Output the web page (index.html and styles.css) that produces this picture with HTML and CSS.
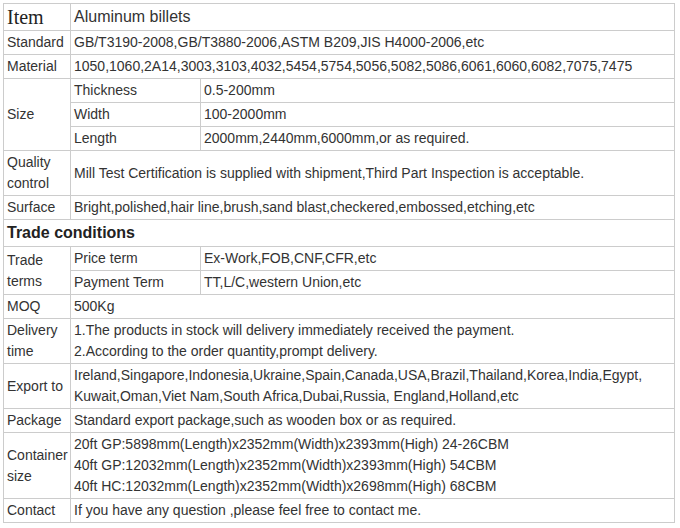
FILE: index.html
```html
<!DOCTYPE html>
<html>
<head>
<meta charset="utf-8">
<link rel="stylesheet" href="styles.css">
</head>
<body>
<table class="spec">
  <colgroup>
    <col class="c1">
    <col class="c2">
    <col class="c3">
  </colgroup>
  <tr class="big">
    <td class="item">Item</td>
    <td colspan="2">Aluminum billets</td>
  </tr>
  <tr>
    <td>Standard</td>
    <td colspan="2">GB/T3190-2008,GB/T3880-2006,ASTM B209,JIS H4000-2006,etc</td>
  </tr>
  <tr>
    <td>Material</td>
    <td colspan="2">1050,1060,2A14,3003,3103,4032,5454,5754,5056,5082,5086,6061,6060,6082,7075,7475</td>
  </tr>
  <tr>
    <td rowspan="3">Size</td>
    <td>Thickness</td>
    <td>0.5-200mm</td>
  </tr>
  <tr>
    <td>Width</td>
    <td>100-2000mm</td>
  </tr>
  <tr>
    <td>Length</td>
    <td>2000mm,2440mm,6000mm,or as required.</td>
  </tr>
  <tr>
    <td>Quality control</td>
    <td colspan="2">Mill Test Certification is supplied with shipment,Third Part Inspection is acceptable.</td>
  </tr>
  <tr>
    <td>Surface</td>
    <td colspan="2">Bright,polished,hair line,brush,sand blast,checkered,embossed,etching,etc</td>
  </tr>
  <tr class="big">
    <td colspan="3" class="section">Trade conditions</td>
  </tr>
  <tr>
    <td rowspan="2">Trade terms</td>
    <td>Price term</td>
    <td>Ex-Work,FOB,CNF,CFR,etc</td>
  </tr>
  <tr>
    <td>Payment Term</td>
    <td>TT,L/C,western Union,etc</td>
  </tr>
  <tr>
    <td>MOQ</td>
    <td colspan="2">500Kg</td>
  </tr>
  <tr>
    <td>Delivery time</td>
    <td colspan="2">1.The products in stock will delivery immediately received the payment.<br>2.According to the order quantity,prompt delivery.</td>
  </tr>
  <tr>
    <td>Export to</td>
    <td colspan="2">Ireland,Singapore,Indonesia,Ukraine,Spain,Canada,USA,Brazil,Thailand,Korea,India,Egypt,<br>Kuwait,Oman,Viet Nam,South Africa,Dubai,Russia, England,Holland,etc</td>
  </tr>
  <tr>
    <td>Package</td>
    <td colspan="2">Standard export package,such as wooden box or as required.</td>
  </tr>
  <tr>
    <td>Container size</td>
    <td colspan="2">20ft GP:5898mm(Length)x2352mm(Width)x2393mm(High) 24-26CBM<br>40ft GP:12032mm(Length)x2352mm(Width)x2393mm(High) 54CBM<br>40ft HC:12032mm(Length)x2352mm(Width)x2698mm(High) 68CBM</td>
  </tr>
  <tr>
    <td>Contact</td>
    <td colspan="2">If you have any question ,please feel free to contact me.</td>
  </tr>
</table>
</body>
</html>
```

FILE: styles.css
```css
html, body {
  margin: 0;
  padding: 0;
  background: #ffffff;
}
body {
  padding: 3px;
  font-family: "Liberation Sans", Arial, sans-serif;
  font-size: 14px;
  color: #333333;
}
.spec {
  border-collapse: collapse;
  table-layout: fixed;
  width: 672px;
}
.c1 { width: 67px; }
.c2 { width: 130px; }
.spec td {
  border: 1px solid #cccccc;
  padding: 1px 1px 1px 3px;
  line-height: 21px;
  vertical-align: middle;
  white-space: normal;
}
.spec tr.big td {
  font-size: 16px;
  line-height: 24px;
}
.spec tr.big td.item {
  font-family: "Liberation Serif", "Times New Roman", serif;
  font-size: 20px;
  color: #222222;
}
.spec tr.big td.section {
  font-weight: bold;
  color: #222222;
}
```
